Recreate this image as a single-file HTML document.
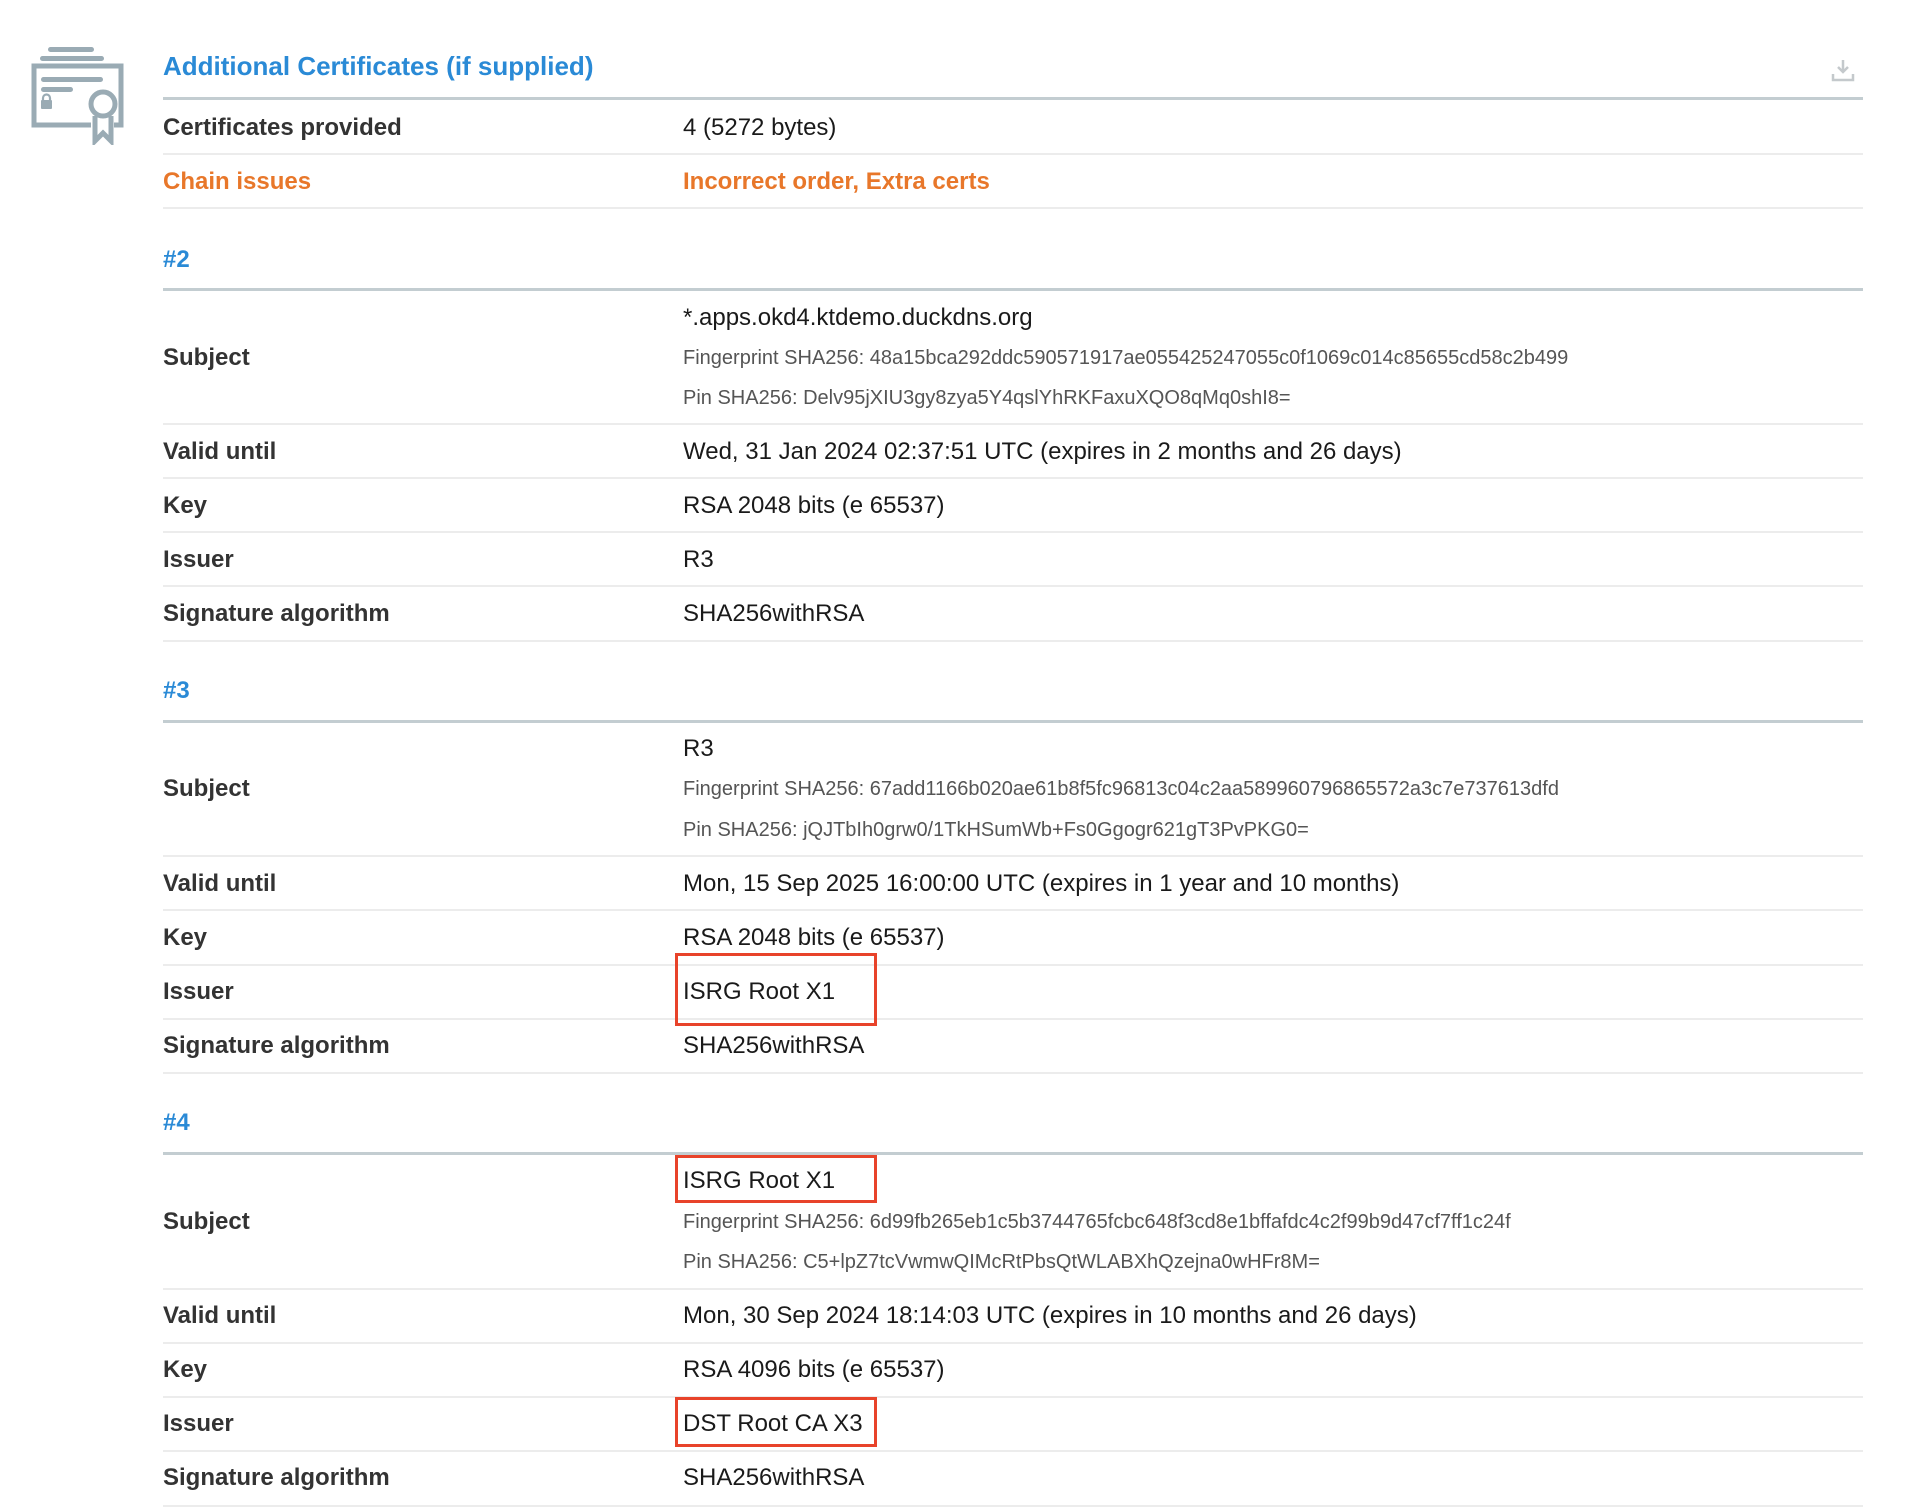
<!DOCTYPE html>
<html><head><meta charset="utf-8">
<style>
body{margin:0;width:1932px;height:1510px;background:#fff;position:relative;overflow:hidden;font-family:"Liberation Sans",Arial,sans-serif;color:#1a1a1a}
.t{position:absolute;line-height:30px;white-space:nowrap;font-size:24px;margin-top:1px}
.l{left:163px;font-weight:bold;color:#333}
.v{left:683px}
.s{font-size:20px;color:#555}
.h{left:163px;font-weight:bold;color:#2a8ad6}
.ln{position:absolute;left:163px;width:1700px;height:2px;background:#ececec}
.hl{position:absolute;left:163px;width:1700px;height:3px;background:#c3cdd1}
.box{position:absolute;border:3px solid #e8432a;box-sizing:border-box;z-index:2}
</style></head><body>
<svg style="position:absolute;left:31px;top:45px" width="96" height="100" viewBox="0 0 96 100">
<g fill="#9aabb4">
<rect x="17" y="2" width="46" height="5" rx="2.5"/>
<rect x="9" y="11" width="64" height="5" rx="2.5"/>
<rect x="10" y="32" width="62" height="5" rx="2.5"/>
<rect x="10" y="42" width="32" height="5" rx="2.5"/>
<rect x="10" y="55" width="11" height="9" rx="1"/>
</g>
<path d="M12 57 v-4 a3.5 3.5 0 0 1 7 0 v4" fill="none" stroke="#9aabb4" stroke-width="2.2"/>
<path d="M60 80 H3 V21 H90 V80 H83" fill="none" stroke="#9aabb4" stroke-width="5"/>
<circle cx="72" cy="59" r="12" fill="none" stroke="#9aabb4" stroke-width="5"/>
<path d="M64 71 V96 L72 88 L80 96 V71" fill="none" stroke="#9aabb4" stroke-width="5"/>
</svg>
<div class="t h" style="top:50px;font-size:26px">Additional Certificates (if supplied)</div>
<svg style="position:absolute;left:1831px;top:58px" width="24" height="24" viewBox="0 0 24 24"><path d="M12 2v12M7 9l5 5 5-5" stroke="#c4c9cc" stroke-width="2.5" fill="none"/><path d="M2 16v6h20v-6" stroke="#c4c9cc" stroke-width="2.5" fill="none"/></svg>
<div class="hl" style="top:97px"></div>

<div class="t l" style="top:112px">Certificates provided</div><div class="t v" style="top:112px">4 (5272 bytes)</div>
<div class="ln" style="top:153px"></div>
<div class="t l" style="top:166px;color:#e8772a">Chain issues</div><div class="t v" style="top:166px;color:#e8772a;font-weight:bold">Incorrect order, Extra certs</div>
<div class="ln" style="top:207px"></div>

<div class="t h" style="top:244px">#2</div>
<div class="hl" style="top:288px"></div>
<div class="t v" style="top:302px">*.apps.okd4.ktdemo.duckdns.org</div>
<div class="t l" style="top:342px">Subject</div>
<div class="t v s" style="top:342px">Fingerprint SHA256: 48a15bca292ddc590571917ae055425247055c0f1069c014c85655cd58c2b499</div>
<div class="t v s" style="top:382px">Pin SHA256: Delv95jXIU3gy8zya5Y4qslYhRKFaxuXQO8qMq0shI8=</div>
<div class="ln" style="top:423px"></div>
<div class="t l" style="top:436px">Valid until</div><div class="t v" style="top:436px">Wed, 31 Jan 2024 02:37:51 UTC (expires in 2 months and 26 days)</div>
<div class="ln" style="top:477px"></div>
<div class="t l" style="top:490px">Key</div><div class="t v" style="top:490px">RSA 2048 bits (e 65537)</div>
<div class="ln" style="top:531px"></div>
<div class="t l" style="top:544px">Issuer</div><div class="t v" style="top:544px">R3</div>
<div class="ln" style="top:585px"></div>
<div class="t l" style="top:598px">Signature algorithm</div><div class="t v" style="top:598px">SHA256withRSA</div>
<div class="ln" style="top:640px"></div>

<div class="t h" style="top:675px">#3</div>
<div class="hl" style="top:720px"></div>
<div class="t v" style="top:733px">R3</div>
<div class="t l" style="top:773px">Subject</div>
<div class="t v s" style="top:773px">Fingerprint SHA256: 67add1166b020ae61b8f5fc96813c04c2aa589960796865572a3c7e737613dfd</div>
<div class="t v s" style="top:814px">Pin SHA256: jQJTbIh0grw0/1TkHSumWb+Fs0Ggogr621gT3PvPKG0=</div>
<div class="ln" style="top:855px"></div>
<div class="t l" style="top:868px">Valid until</div><div class="t v" style="top:868px">Mon, 15 Sep 2025 16:00:00 UTC (expires in 1 year and 10 months)</div>
<div class="ln" style="top:909px"></div>
<div class="t l" style="top:922px">Key</div><div class="t v" style="top:922px">RSA 2048 bits (e 65537)</div>
<div class="ln" style="top:964px"></div>
<div class="t l" style="top:976px">Issuer</div><div class="t v" style="top:976px">ISRG Root X1</div>
<div class="box" style="left:675px;top:953px;width:202px;height:73px"></div>
<div class="ln" style="top:1018px"></div>
<div class="t l" style="top:1030px">Signature algorithm</div><div class="t v" style="top:1030px">SHA256withRSA</div>
<div class="ln" style="top:1072px"></div>

<div class="t h" style="top:1107px">#4</div>
<div class="hl" style="top:1152px"></div>
<div class="t v" style="top:1165px">ISRG Root X1</div>
<div class="box" style="left:675px;top:1155px;width:202px;height:48px"></div>
<div class="t l" style="top:1206px">Subject</div>
<div class="t v s" style="top:1206px">Fingerprint SHA256: 6d99fb265eb1c5b3744765fcbc648f3cd8e1bffafdc4c2f99b9d47cf7ff1c24f</div>
<div class="t v s" style="top:1246px">Pin SHA256: C5+lpZ7tcVwmwQIMcRtPbsQtWLABXhQzejna0wHFr8M=</div>
<div class="ln" style="top:1288px"></div>
<div class="t l" style="top:1300px">Valid until</div><div class="t v" style="top:1300px">Mon, 30 Sep 2024 18:14:03 UTC (expires in 10 months and 26 days)</div>
<div class="ln" style="top:1342px"></div>
<div class="t l" style="top:1354px">Key</div><div class="t v" style="top:1354px">RSA 4096 bits (e 65537)</div>
<div class="ln" style="top:1396px"></div>
<div class="t l" style="top:1408px">Issuer</div><div class="t v" style="top:1408px">DST Root CA X3</div>
<div class="box" style="left:675px;top:1397px;width:202px;height:50px"></div>
<div class="ln" style="top:1450px"></div>
<div class="t l" style="top:1462px">Signature algorithm</div><div class="t v" style="top:1462px">SHA256withRSA</div>
<div class="ln" style="top:1505px"></div>
</body></html>
